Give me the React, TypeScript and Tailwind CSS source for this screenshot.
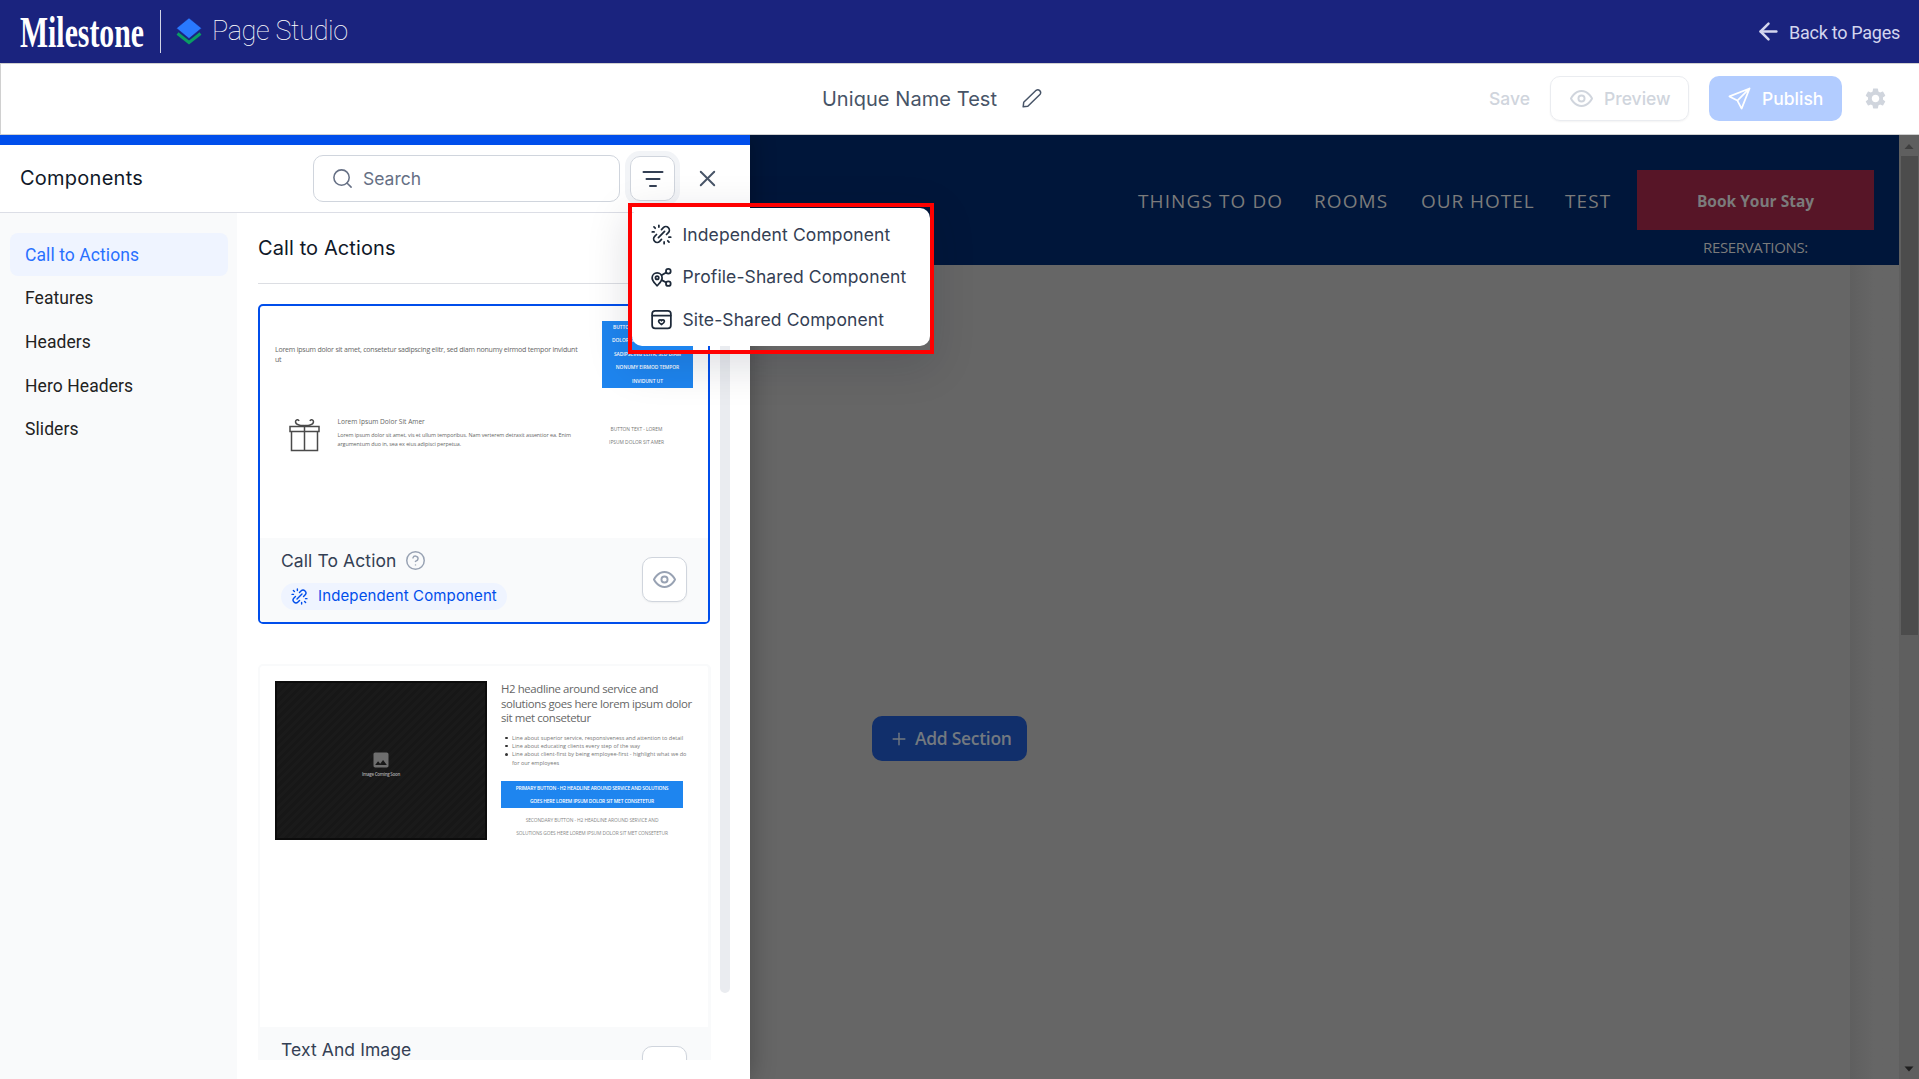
import React from "react";
import { Search, X, CircleHelp, ArrowLeft, Plus } from "lucide-react";
import { MdSettings, MdImage } from "react-icons/md";

type IconProps = { className?: string; strokeWidth?: number };

function Svg({ className, strokeWidth = 2, children }: IconProps & { children: React.ReactNode }) {
  return (
    <svg
      viewBox="0 0 24 24"
      fill="none"
      stroke="currentColor"
      strokeWidth={strokeWidth}
      strokeLinecap="round"
      strokeLinejoin="round"
      className={className}
    >
      {children}
    </svg>
  );
}

const UnlinkIcon = (p: IconProps) => (
  <Svg {...p}>
    <path d="M8.5 15.5 15.5 8.5M12 6.3l2.1-2.1a4 4 0 0 1 5.7 5.7L17.7 12M6.3 12l-2.1 2.1a4 4 0 0 0 5.7 5.7l2.1-2.1M9 3.5V1.5M15 20.500v2M3.500 9h-2M20.500 15h2M4.800 4.800 3.400 3.400M19.200 19.200l1.400 1.400" />
  </Svg>
);

const ProfileShareIcon = (p: IconProps) => (
  <Svg {...p}>
    <path d="M7 21.500c-2-2.500-5.700-5.500-5.700-9a5.700 5.700 0 0 1 11.400 0c0 3.500-3.700 6.500-5.700 9z" />
    <circle cx="7" cy="12.300" r="1.900" />
    <circle cx="19.800" cy="4.800" r="2.700" />
    <circle cx="19.800" cy="19" r="2.700" />
    <path d="M17.400 6.200 12 9.500M12.300 15l5.100 2.700" />
  </Svg>
);

const SiteShareIcon = (p: IconProps) => (
  <Svg {...p}>
    <rect x="1.300" y="2" width="21.400" height="20" rx="3.500" />
    <path d="M1.500 7.500h21" />
    <path d="M12 17.800c-1.600-1-3.300-2.200-3.300-3.800 0-2 2.500-2.200 3.300-.6.800-1.600 3.300-1.400 3.300.6 0 1.600-1.700 2.800-3.300 3.800z" />
  </Svg>
);

const EyeIcon = (p: IconProps) => (
  <Svg {...p}>
    <path d="M1 12s3.700-7.800 11-7.800S23 12 23 12s-3.700 7.800-11 7.800S1 12 1 12z" />
    <circle cx="12" cy="12" r="3.200" />
  </Svg>
);

const SendIcon = (p: IconProps) => (
  <Svg {...p}>
    <path d="M22.500 1.500 1.500 9.800l8.300 4.400 4.400 8.300z M22.500 1.500 9.800 14.200" />
  </Svg>
);

const PencilIcon = (p: IconProps) => (
  <Svg {...p}>
    <path d="M2.500 21.500l.6-5.200L17.300 2.600a3.300 3.300 0 0 1 4.600 4.500L7.800 20.900z" />
  </Svg>
);

const FilterIcon = (p: IconProps) => (
  <Svg {...p}>
    <path d="M2.500 5h19M5.500 12h13M9 19h6" />
  </Svg>
);

const GiftIcon = ({ className }: IconProps) => (
  <svg viewBox="0 0 32 34" fill="none" stroke="#4a4a4a" strokeWidth="1.500" className={className}>
    <path d="M1 8.500h29v5H1zM2.500 13.500h26v19h-26zM15.500 8.500v24" />
    <path d="M15.500 7.500c-3 .3-9-.3-9-3.700C6.500 1.500 9.500 1 10 3M15.500 7.500c3 .3 9-.3 9-3.700 0-2.300-3-2.800-3.500-.8" />
  </svg>
);

function TopBar() {
  return (
    <header className="flex h-[63px] items-center bg-[#1a237e] pl-5 pr-[19px]">
      <div className="flex h-[43px] w-[141px] items-center border-r border-white/80">
        <svg width="130" height="62" viewBox="0 0 130 62" className="shrink-0 overflow-visible">
          <text
            transform="translate(0 45.500) scale(1 1.400)"
            fontFamily="'Liberation Serif', serif"
            fontWeight="700"
            fontSize="32"
            textLength="124"
            lengthAdjust="spacingAndGlyphs"
            fill="#fff"
          >
            Milestone
          </text>
        </svg>
      </div>
      <svg viewBox="0 0 26 27" className="ml-[15px] h-[27px] w-[26px]">
        <path d="M1.500 15.500 13 24.500l11.500-9" fill="none" stroke="#0a9d63" strokeWidth="3" />
        <path d="M13 0 25.500 10.200 13 20.500.500 10.200z" fill="#2979ff" stroke="#1a237e" strokeWidth=".5" />
      </svg>
      <span className="ml-[10px] -mt-px font-['Roboto',sans-serif] text-[27px] font-thin tracking-[-0.350px] text-white">
        Page Studio
      </span>
      <div className="ml-auto flex items-center gap-[7px] text-[#d3d5ee]">
        <ArrowLeft size={27} strokeWidth={2.200} />
        <span className="mt-[2px] font-['Roboto',sans-serif] text-[18px] tracking-[-0.270px]">Back to Pages</span>
      </div>
    </header>
  );
}

function ActionBar() {
  return (
    <div className="relative z-20 grid h-[72px] grid-cols-[1fr_auto_1fr] items-center border border-r-0 border-[#d0d0d0] bg-white pb-px pr-[31px] font-['Inter',sans-serif]">
      <div />
      <div className="flex items-center gap-6 pr-[25px] text-[#475467]">
        <span className="text-[20px] tracking-[0.070px]">Unique Name Test</span>
        <PencilIcon className="size-[21px]" strokeWidth={1.700} />
      </div>
      <div className="flex items-center justify-end text-[17.500px] font-medium text-[#d0d5dd]">
        <span className="mt-px">Save</span>
        <div className="ml-5 flex h-[45px] w-[139px] items-center rounded-[10px] border border-[#eaecf0] pl-[19px] shadow-xs">
          <EyeIcon className="size-[23px]" strokeWidth={2} />
          <span className="ml-[11px] mt-[2px]">Preview</span>
        </div>
        <div className="ml-5 flex h-[45px] w-[133px] items-center rounded-[10px] bg-[#b2ccff] pl-[19px] text-white">
          <SendIcon className="size-[23px]" strokeWidth={1.800} />
          <span className="ml-[11px] mt-[2px]">Publish</span>
        </div>
        <MdSettings size={25} className="ml-[21px]" />
      </div>
    </div>
  );
}

const categories = ["Call to Actions", "Features", "Headers", "Hero Headers", "Sliders"];

function Categories() {
  return (
    <nav className="flex w-[237px] shrink-0 flex-col gap-[0.600px] bg-[#f9fafb] px-[10px] pt-5 font-['Roboto',sans-serif] text-[17.500px] tracking-[0.080px]">
      {categories.map((c, i) => (
        <div
          key={c}
          className={
            i === 0
              ? "flex h-[43px] w-[218px] items-center rounded-lg bg-[#eff4ff] pl-[15px] pt-[2px] text-[#2970ff]"
              : "flex h-[43px] w-[218px] items-center pl-[15px] pt-px text-[#222]"
          }
        >
          {c}
        </div>
      ))}
    </nav>
  );
}

function PreviewButton() {
  return (
    <div className="flex size-[45px] items-center justify-center rounded-[10px] border border-[#d0d5dd] bg-white text-[#98a2b3] shadow-xs">
      <EyeIcon className="size-[23px]" />
    </div>
  );
}

function CallToActionCard() {
  return (
    <article className="flex h-[320px] w-[452px] shrink-0 flex-col overflow-hidden rounded-[5px] border-2 border-[#004eeb] bg-white">
      <div className="flex h-[232px] flex-col pl-[15px] pr-[15px] pt-[15px] font-['Open_Sans',sans-serif] text-[#666]">
        <div className="flex justify-between">
          <p className="w-[310px] whitespace-nowrap pt-[24px] text-[7px] leading-[10px] tracking-[-0.205px]">
            Lorem ipsum dolor sit amet, consetetur sadipscing elitr, sed diam nonumy eirmod tempor invidunt
            <br />
            ut
          </p>
          <div className="h-[67px] w-[91px] whitespace-nowrap bg-[#1e85ef] text-center text-[4.900px] font-semibold leading-[13.400px] tracking-[-0.050px] text-white">
            BUTTON TEXT - LOREM IPSUM
            <br />
            DOLOR SIT AMET CONSETETUR
            <br />
            SADIPSCING ELITR, SED DIAM
            <br />
            NONUMY EIRMOD TEMPOR
            <br />
            INVIDUNT UT
          </div>
        </div>
        <div className="mt-[30px] flex">
          <GiftIcon className="ml-[14px] h-[34px] w-[32px]" />
          <div className="ml-[16.500px] w-[250px] whitespace-nowrap">
            <div className="text-[6.600px] leading-[8px]">Lorem Ipsum Dolor Sit Amer</div>
            <p className="mt-[5px] text-[5.400px] leading-[8.500px] tracking-[-0.065px]">
              Lorem ipsum dolor sit amet, vis et ullum temporibus. Nam verterem detraxit assentior ea. Enim
              <br />
              argumentum duo in, sea ex eius adipisci perpetua.
            </p>
          </div>
          <div className="ml-[11.500px] mt-[5px] w-[75px] whitespace-nowrap text-center text-[4.900px] leading-[13.300px] tracking-[-0.030px] text-[#777]">
            BUTTON TEXT - LOREM
            <br />
            IPSUM DOLOR SIT AMER
          </div>
        </div>
      </div>
      <footer className="flex flex-1 items-start justify-between bg-[#f9fafb] pl-[21px] pr-[21px] font-['Inter',sans-serif]">
        <div>
          <div className="mt-[11px] flex h-6 items-center gap-[10px] text-[17.500px] tracking-[0.090px] text-[#344054]">
            Call To Action
            <CircleHelp size={21} strokeWidth={1.700} className="-mt-[2px] -ml-px text-[#98a2b3]" />
          </div>
          <div className="mt-[10px] flex h-[27px] w-[226px] items-center gap-[10px] whitespace-nowrap rounded-full bg-[#eff4ff] pl-[10px] text-[15px] tracking-[0.130px] text-[#004eeb]">
            <UnlinkIcon className="size-[17px]" />
            Independent Component
          </div>
        </div>
        <div className="mt-[19px]">
          <PreviewButton />
        </div>
      </footer>
    </article>
  );
}

const bullets = [
  "Line about superior service, responsiveness and attention to detail",
  "Line about educating clients every step of the way",
  "Line about client-first by being employee-first - highlight what we do\nfor our employees",
];

function TextAndImageCard() {
  return (
    <article className="mt-10 flex h-[400px] w-[453px] shrink-0 flex-col rounded-[5px] border-2 border-r-[3px] border-[#f9fafb] bg-white font-['Open_Sans',sans-serif]">
      <div className="flex h-[361px] shrink-0 pl-[15px] pt-[15px]">
        <div className="flex h-[159px] w-[212px] flex-col items-center border-2 border-[#0c0c0c] bg-[repeating-linear-gradient(135deg,#171717_0,#171717_3px,#1a1a1a_3px,#1a1a1a_6px)] pt-[67px] text-[#6e6e6e]">
          <MdImage size={20} />
          <span className="mt-[1px] whitespace-nowrap text-[4.500px] font-semibold leading-[6px] tracking-[-0.290px] text-[#aaa]">
            Image Coming Soon
          </span>
        </div>
        <div className="ml-[14px] w-[198px] whitespace-nowrap">
          <h2 className="mt-[1px] text-[11.400px] leading-[14.500px] tracking-[-0.380px] text-[#666]">
            H2 headline around service and
            <br />
            solutions goes here lorem ipsum dolor
            <br />
            sit met consetetur
          </h2>
          <ul className="mt-[8px] text-[5.500px] leading-[8.400px] tracking-[0.010px] text-[#777]">
            {bullets.map((b) => (
              <li key={b} className="flex gap-[4.500px] pl-[4px] whitespace-pre">
                <span className="mt-[3px] size-[2.500px] rounded-full bg-[#333]" />
                {b}
              </li>
            ))}
          </ul>
          <div className="mt-[14px] h-[27px] w-[182px] bg-[#1e85ef] pt-[0.600px] text-center text-[4.900px] font-semibold leading-[13.300px] tracking-[-0.160px] text-white">
            PRIMARY BUTTON - H2 HEADLINE AROUND SERVICE AND SOLUTIONS
            <br />
            GOES HERE LOREM IPSUM DOLOR SIT MET CONSETETUR
          </div>
          <div className="mt-[6px] w-[182px] text-center text-[4.900px] leading-[13.300px] tracking-[-0.100px] text-[#888]">
            SECONDARY BUTTON - H2 HEADLINE AROUND SERVICE AND
            <br />
            SOLUTIONS GOES HERE LOREM IPSUM DOLOR SIT MET CONSETETUR
          </div>
        </div>
      </div>
      <footer className="flex h-[90px] shrink-0 items-start justify-between bg-[#f9fafb] pl-[21px] pr-[21px] font-['Inter',sans-serif]">
        <span className="mt-[11px] text-[17.500px] leading-6 tracking-[0.090px] text-[#344054]">Text And Image</span>
        <div className="mt-[19px]">
          <PreviewButton />
        </div>
      </footer>
    </article>
  );
}

const filters = [
  { label: "Independent Component", Icon: UnlinkIcon },
  { label: "Profile-Shared Component", Icon: ProfileShareIcon },
  { label: "Site-Shared Component", Icon: SiteShareIcon },
];

function FilterMenu() {
  return (
    <div className="absolute left-[-3px] top-[46px] z-20 h-[151px] w-[306px] border-4 border-[#ff0000] pt-px shadow-[0_12px_40px_rgba(16,24,40,0.14)]">
      <div className="flex h-[138px] w-[298px] flex-col rounded-[10px] bg-white pl-[18.500px] pt-[5.500px] font-['Inter',sans-serif] text-[17.500px] tracking-[0.110px] text-[#344054]">
        {filters.map(({ label, Icon }) => (
          <div key={label} className="flex h-[42.500px] items-center gap-[11px] whitespace-nowrap">
            <Icon className="size-[21px] text-[#1d2939]" />
            {label}
          </div>
        ))}
      </div>
    </div>
  );
}

function ComponentsPanel() {
  return (
    <aside className="z-10 flex w-[750px] shrink-0 flex-col border-t-[10px] border-[#004eeb] bg-white shadow-[0_0_24px_rgba(0,0,0,0.3)]">
      <div className="flex h-[68px] shrink-0 items-center border-b border-[#dcdee6] pl-5 font-['Inter',sans-serif]">
        <h1 className="-mt-[2px] w-[293px] text-[20px] tracking-[0.250px] text-[#101828]">Components</h1>
        <div className="flex h-[47px] w-[307px] items-center gap-[10px] rounded-[10px] border border-[#d0d5dd] pl-[17px] text-[17.500px] text-[#667085]">
          <Search size={23} strokeWidth={1.600} />
          <span className="-ml-px mt-px">Search</span>
        </div>
        <div className="relative ml-[10px] flex size-[45px] items-center justify-center rounded-[10px] border border-[#d0d5dd] text-[#344054] ring-[5px] ring-[#f2f4f7]">
          <FilterIcon className="size-[24px]" strokeWidth={2} />
          <FilterMenu />
        </div>
        <X size={27} strokeWidth={1.700} className="ml-[19px] text-[#475467]" />
      </div>
      <div className="flex min-h-0 flex-1">
        <Categories />
        <div className="flex min-w-0 flex-1 flex-col pl-[21px] pr-5">
          <h2 className="flex h-[71px] shrink-0 items-center border-b border-[#dcdee3] font-['Inter',sans-serif] text-[20px] tracking-[0.100px] text-[#101828]">
            Call to Actions
          </h2>
          <div className="mt-5 flex h-[756px] justify-between overflow-hidden">
            <div className="flex flex-col">
              <CallToActionCard />
              <TextAndImageCard />
            </div>
            <div className="h-[689px] w-[10px] rounded-full bg-[#eaecf0]" />
          </div>
        </div>
      </div>
    </aside>
  );
}

function SitePreview() {
  return (
    <main className="flex flex-1 bg-[#666]">
      <div className="flex flex-1 flex-col">
        <div className="flex h-[130px] items-start justify-end bg-[#00163a] pr-[25px] font-['Open_Sans',sans-serif] text-[#7b7b7b]">
          <div className="mt-[52px] flex h-[28px] items-center whitespace-nowrap pr-0 text-[19px] tracking-[1.100px]">
            <span className="w-[176px]">THINGS TO DO</span>
            <span className="w-[107px]">ROOMS</span>
            <span className="w-[144px] tracking-[0.950px]">OUR HOTEL</span>
            <span className="w-[72px]">TEST</span>
          </div>
          <div className="mt-[35px] w-[237px] text-center">
            <div className="flex h-[60px] items-center justify-center bg-[#571527] pt-1 text-[15.500px] font-bold">
              Book Your Stay
            </div>
            <div className="mt-[5px] text-[15px] leading-6 tracking-[-0.350px]">RESERVATIONS:</div>
          </div>
        </div>
        <div className="flex min-h-0 flex-1">
          <div className="flex-1 pl-[122px] pt-[451px]">
            <div className="flex h-[45px] w-[155px] items-center rounded-[10px] bg-[#112f6b] pl-[17px] font-['Open_Sans',sans-serif] text-[17.500px] font-semibold tracking-[-0.300px] text-[#737980]">
              <Plus size={20} strokeWidth={1.700} />
              <span className="ml-[6px] whitespace-nowrap">Add Section</span>
            </div>
          </div>
          <div className="w-[49px] bg-linear-to-r from-[#5f5f5f] to-[#666] to-50%" />
        </div>
      </div>
      <div className="flex w-5 flex-col items-center bg-[#5f5f5f]">
        <svg width="20" height="21" viewBox="0 0 20 21">
          <path d="M5.500 14 10 9l4.500 5z" fill="#3f3f3f" />
        </svg>
        <div className="h-[479px] w-[17px] bg-[#4c4c4c]" />
        <svg width="20" height="20" viewBox="0 0 20 20" className="mt-auto">
          <path d="M5.500 7.500 10 12.500l4.500-5z" fill="#1f1f1f" />
        </svg>
      </div>
    </main>
  );
}

export default function App() {
  return (
    <div className="flex h-[1079px] w-[1919px] flex-col overflow-hidden">
      <TopBar />
      <ActionBar />
      <div className="flex min-h-0 flex-1">
        <ComponentsPanel />
        <SitePreview />
      </div>
    </div>
  );
}
